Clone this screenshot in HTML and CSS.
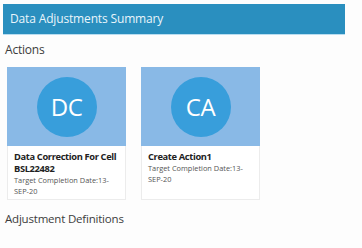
FILE: index.html
```html
<!DOCTYPE html>
<html>
<head>
<meta charset="utf-8">
<link rel="stylesheet" href="styles.css">
</head>
<body>
<div class="page">
  <header class="topbar">Data Adjustments Summary</header>
  <h2 class="section-title">Actions</h2>
  <div class="cards">
    <div class="card">
      <div class="card-media"><div class="avatar">DC</div></div>
      <div class="card-body">
        <div class="card-title">Data Correction For Cell BSL22482</div>
        <div class="card-sub">Target Completion Date:13-SEP-20</div>
      </div>
    </div>
    <div class="card">
      <div class="card-media"><div class="avatar">CA</div></div>
      <div class="card-body">
        <div class="card-title">Create Action1</div>
        <div class="card-sub">Target Completion Date:13-SEP-20</div>
      </div>
    </div>
  </div>
  <h2 class="section-title lower">Adjustment Definitions</h2>
</div>
</body>
</html>
```
FILE: styles.css
```css
html, body {
  margin: 0;
  padding: 0;
  background: #fdfdfd;
}
body {
  font-family: "Open Sans", "Noto Sans", sans-serif;
  width: 362px;
  height: 248px;
  overflow: hidden;
}
.page {
  padding: 4px 17px 0 3px;
}
.topbar {
  height: 30px;
  background: #2a8fbf;
  border-bottom: 1px solid #b9ddf0;
  color: #e9f5fb;
  font-size: 12px;
  line-height: 30px;
  padding-left: 7px;
  letter-spacing: -0.15px;
}
.section-title {
  margin: 0;
  font-weight: normal;
  font-size: 12px;
  color: #3c3c3c;
  padding-left: 2px;
  line-height: 16px;
  margin-top: 7px;
  letter-spacing: -0.2px;
}
.section-title.lower {
  font-size: 11.5px;
  margin-top: 11px;
}
.cards {
  display: flex;
  gap: 15px;
  padding-left: 4px;
  margin-top: 9px;
}
.card {
  width: 119px;
  background: #fff;
  border: 1px solid #ececec;
  border-top: none;
  box-sizing: border-box;
  height: 133px;
}
.card-media {
  height: 79px;
  background: #89b9e6;
  display: flex;
  align-items: center;
  justify-content: center;
  margin: 0 -1px;
}
.avatar {
  width: 60px;
  height: 60px;
  border-radius: 50%;
  background: #389edb;
  color: #fff;
  font-size: 24px;
  display: flex;
  align-items: center;
  justify-content: center;
  letter-spacing: -0.5px;
}
.card-body {
  padding: 5px 6px 0 6px;
}
.card-title {
  font-weight: bold;
  font-size: 9.3px;
  line-height: 12px;
  color: #222;
  letter-spacing: -0.35px;
}
.card-sub {
  font-size: 7.4px;
  line-height: 11px;
  color: #555;
}
```
